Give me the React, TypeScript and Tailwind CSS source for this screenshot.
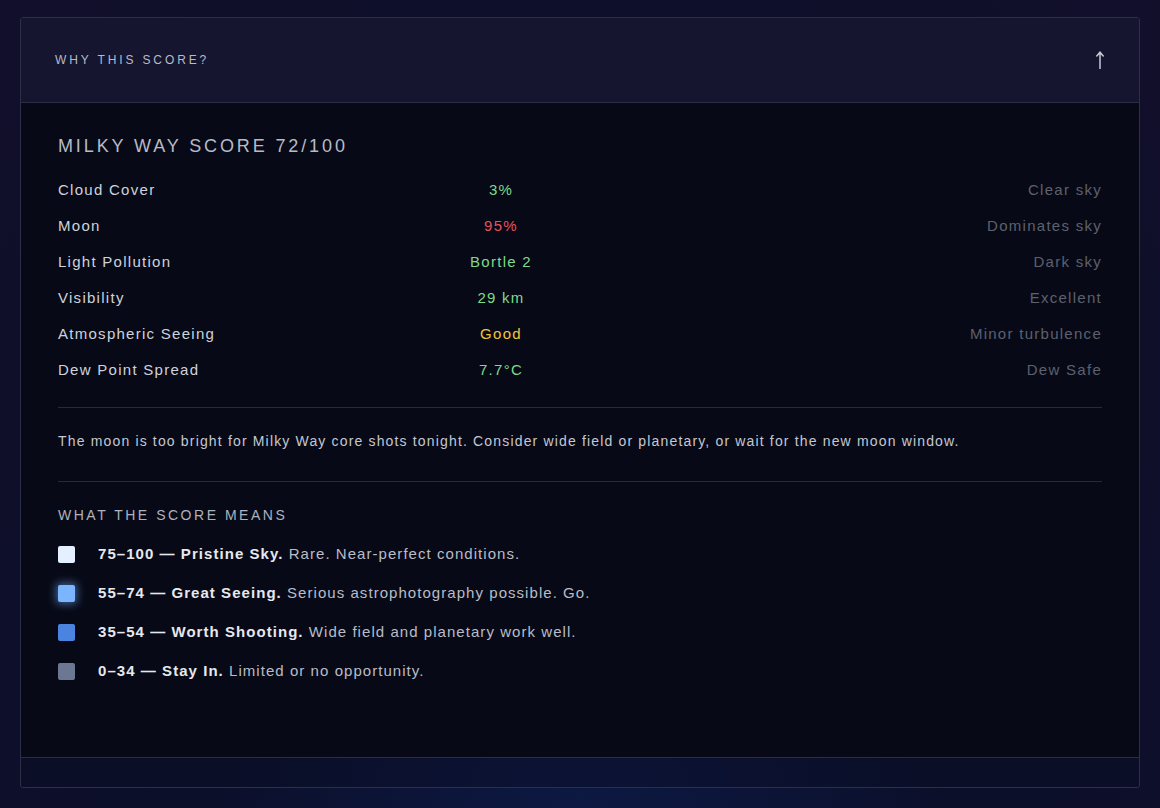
const factors = [
  { label: "Cloud Cover", value: "3%", tone: "text-[#7fd98a]", note: "Clear sky" },
  { label: "Moon", value: "95%", tone: "text-[#e5535a]", note: "Dominates sky" },
  { label: "Light Pollution", value: "Bortle 2", tone: "text-[#7fd98a]", note: "Dark sky" },
  { label: "Visibility", value: "29 km", tone: "text-[#7fd98a]", note: "Excellent" },
  { label: "Atmospheric Seeing", value: "Good", tone: "text-[#f2c53d]", note: "Minor turbulence" },
  { label: "Dew Point Spread", value: "7.7°C", tone: "text-[#7fd98a]", note: "Dew Safe" },
];

const legend = [
  { range: "75–100", name: "Pristine Sky.", desc: "Rare. Near-perfect conditions.", swatch: "bg-[#e4efff]" },
  {
    range: "55–74",
    name: "Great Seeing.",
    desc: "Serious astrophotography possible. Go.",
    swatch: "bg-[#7cb5ff] shadow-[0_0_8px_2px_rgba(110,170,255,0.55)]",
  },
  { range: "35–54", name: "Worth Shooting.", desc: "Wide field and planetary work well.", swatch: "bg-[#4a84e0]" },
  { range: "0–34", name: "Stay In.", desc: "Limited or no opportunity.", swatch: "bg-[#6c7892]" },
];

export default function App() {
  return (
    <div
      className="min-h-screen w-full bg-[radial-gradient(ellipse_at_50%_110%,#0d1a45_0%,#0b0f2a_45%,#120f2b_100%)] px-5 pt-[17px] pb-5"
      style={{ fontFamily: '"Liberation Sans", Arial, sans-serif' }}
    >
      <div className="rounded-[3px] border border-[#2c2f48] bg-[#0a0d22]/40">
        {/* toggle header */}
        <button
          type="button"
          className="flex h-[84px] w-full items-center justify-between bg-[#1a1833]/70 pl-[34px] pr-[34px] text-left"
        >
          <span className="text-[12px] tracking-[0.24em] text-[#b9b9c9]">WHY THIS SCORE?</span>
          <svg width="10" height="18" viewBox="0 0 10 18" fill="none" className="text-[#c8cad6]">
            <path d="M5 17.5V1.5M1.8 5L5 1.2 8.2 5" stroke="currentColor" strokeWidth="1.5" strokeLinecap="round" />
          </svg>
        </button>

        {/* expanded panel */}
        <div className="border-y border-[#2a2e45] bg-[#070a16] px-[37px] pt-[30px] pb-[77px]">
          <h2 className="text-[18px] tracking-[0.16em] text-[#b8bbc6]">MILKY WAY SCORE 72/100</h2>

          <div className="mt-[12px] flex flex-col">
            {factors.map((f) => (
              <div
                key={f.label}
                className="grid h-[36px] grid-cols-[380px_126px_1fr] items-center text-[15px] tracking-[0.085em]"
              >
                <span className="text-[#cfd2dc]">{f.label}</span>
                <span className={`text-center ${f.tone}`}>{f.value}</span>
                <span className="text-right text-[#5d606e]">{f.note}</span>
              </div>
            ))}
          </div>

          <div className="mt-[19px] border-t border-[#262a3a]" />
          <p className="pt-[23px] pb-[29px] text-[14px] tracking-[0.083em] text-[#c4c7d2]">
            The moon is too bright for Milky Way core shots tonight. Consider wide field or planetary, or wait for
            the new moon window.
          </p>
          <div className="border-t border-[#262a3a]" />

          <h3 className="mt-[23px] text-[14px] tracking-[0.18em] text-[#aeb1be]">WHAT THE SCORE MEANS</h3>

          <ul className="mt-[19px] flex flex-col gap-[21px]">
            {legend.map((l) => (
              <li key={l.range} className="flex h-[18px] items-center gap-[23px] text-[15px] tracking-[0.07em]">
                <span className={`h-[17px] w-[17px] shrink-0 rounded-[2px] ${l.swatch}`} />
                <span>
                  <span className="font-bold text-[#e6e8ef]">
                    {l.range} — {l.name}
                  </span>{" "}
                  <span className="text-[#b9bcc8]">{l.desc}</span>
                </span>
              </li>
            ))}
          </ul>
        </div>

        <div className="h-[29px]" />
      </div>
    </div>
  );
}
